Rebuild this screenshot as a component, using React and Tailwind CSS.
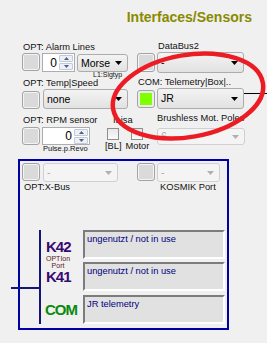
import React from 'react';

function Btn({ className = '' }) {
  return (
    <div className={`w-[18px] shrink-0 rounded-[3px] border border-[#a3a3a3] bg-[#dadada] shadow-[inset_0_0_0_1px_#f4f4f4] ${className}`} />
  );
}

function GreenBtn({ className = '' }) {
  return (
    <div className={`w-[18px] shrink-0 rounded-[3px] border border-[#a3a3a3] bg-[#ececec] p-[2px] ${className}`}>
      <div className="w-full h-full bg-[#80ff00]" />
    </div>
  );
}

function Arrow({ color = '#000' }) {
  return (
    <svg width="7" height="4" viewBox="0 0 7 4" className="shrink-0">
      <path d="M0 0H7L3.5 4Z" fill={color} />
    </svg>
  );
}

function Drop({ className = '', text, disabled }) {
  return (
    <div
      className={`flex shrink-0 items-center justify-between rounded-[3px] border pl-[3px] pr-[5px] text-[10.5px] leading-none ${
        disabled
          ? 'border-[#d0d0d0] bg-[#f4f4f4] text-[#a8a8a8]'
          : 'border-[#acacac] bg-linear-to-b from-[#f3f3f3] to-[#e2e2e2] text-black'
      } ${className}`}
    >
      <span>{text}</span>
      <Arrow color={disabled ? '#b0b0b0' : '#000'} />
    </div>
  );
}

function Num({ className = '' }) {
  return (
    <div className={`flex shrink-0 items-center border border-[#abadb3] bg-white pr-[1px] ${className}`}>
      <span className="flex-1 pr-[2px] text-right text-[12px] leading-none text-black">0</span>
      <div className="flex h-[15px] w-[14px] flex-col gap-[1px]">
        <div className="flex flex-1 items-center justify-center rounded-[1px] border border-[#c3cad6] bg-[#edf1f7]">
          <svg width="5" height="3" viewBox="0 0 5 3"><path d="M0 3H5L2.5 0Z" fill="#4d6185" /></svg>
        </div>
        <div className="flex flex-1 items-center justify-center rounded-[1px] border border-[#c3cad6] bg-[#edf1f7]">
          <svg width="5" height="3" viewBox="0 0 5 3"><path d="M0 0H5L2.5 3Z" fill="#4d6185" /></svg>
        </div>
      </div>
    </div>
  );
}

function Check() {
  return <div className="h-[12px] w-[12px] shrink-0 border border-[#8e8f8f] bg-linear-to-b from-[#e8e8e8] to-[#fafafa]" />;
}

function InfoBox({ className = '', children }) {
  return (
    <div className={`h-[29px] border-2 border-t-[#7c7c7c] border-l-[#7c7c7c] border-r-white border-b-white bg-[#e1e1e1] pl-[2px] pt-[1px] text-[9.3px] leading-[12px] text-[#000080] ${className}`}>
      {children}
    </div>
  );
}

export default function App() {
  return (
    <div className="relative h-[343px] w-[267px] overflow-hidden bg-[#f0f0f0] font-['Liberation_Sans',Arial,sans-serif] text-[9.3px] text-[#111]">
      <div className="h-[24px] pr-[15px] pt-[10px] text-right text-[14px] font-bold leading-[14px] text-[#8a8a00]">
        Interfaces/Sensors
      </div>

      {/* row: alarm lines / databus2 */}
      <div className="mt-[17px] flex pl-[22px]">
        <div className="flex w-[115px] flex-col">
          <div className="h-[12px] pl-[1px] leading-[12px]">OPT: Alarm Lines</div>
          <div className="flex h-[19px] items-start">
            <Btn className="h-[18px]" />
            <Num className="ml-[2px] h-[19px] w-[33px]" />
            <Drop className="ml-[2px] mt-[1px] h-[18px] w-[51px]" text="Morse" />
          </div>
          <div className="h-[6px] pl-[71px] text-[7px] leading-[6px]">L1:Sigtyp</div>
        </div>
        <div className="flex flex-col">
          <div className="h-[11px] pl-[21px] leading-[11px]">DataBus2</div>
          <div className="flex items-start">
            <Btn className="mt-[1px] h-[19px]" />
            <Drop className="ml-[2px] h-[21px] w-[87px]" text="-" />
          </div>
        </div>
      </div>

      {/* row: temp speed / telemetry */}
      <div className="flex pl-[22px]">
        <div className="flex w-[115px] flex-col">
          <div className="h-[11px] pl-[1px] leading-[11px]">OPT: Temp|Speed</div>
          <div className="flex items-start">
            <Btn className="mt-[2px] h-[18px]" />
            <Drop className="ml-[3px] h-[20px] w-[85px]" text="none" />
          </div>
        </div>
        <div className="-mt-[1px] flex flex-1 flex-col">
          <div className="h-[11px] pl-[1px] leading-[11px]">COM: Telemetry|Box|..</div>
          <div className="flex items-start">
            <GreenBtn className="mt-[2px] h-[18px]" />
            <Drop className="ml-[2px] h-[21px] w-[87px]" text="JR" />
            <div className="mt-[5px] flex-1 border-t border-black" />
          </div>
        </div>
      </div>

      {/* row: rpm / motor / poles */}
      <div className="flex pl-[22px]">
        <div className="flex w-[83px] flex-col">
          <div className="mt-[5px] h-[12px] pl-[1px] leading-[12px]">OPT: RPM sensor</div>
          <div className="mt-[1px] flex items-start">
            <Btn className="h-[18px]" />
            <Num className="ml-[2px] h-[18px] w-[48px]" />
          </div>
          <div className="mt-[1px] h-[6px] pl-[21px] text-[7.5px] leading-[6px]">Pulse.p.Revo</div>
        </div>
        <div className="flex w-[45px] flex-col">
          <div className="mt-[5px] h-[12px] pl-[8px] leading-[12px]">It isa</div>
          <div className="mt-[2px] flex pl-[2px]">
            <Check />
            <div className="ml-[12px]"><Check /></div>
          </div>
          <div className="mt-[1px] flex h-[11px] leading-[11px]">
            <span>[BL]</span>
            <span className="ml-[4px]">Motor</span>
          </div>
        </div>
        <div className="ml-[7px] flex flex-col">
          <div className="mt-[3px] h-[12px] leading-[12px]">Brushless Mot. Poles</div>
          <Drop className="mt-[4px] h-[17px] w-[88px]" text="6" disabled />
        </div>
      </div>

      {/* port panel */}
      <div className="ml-[18px] mt-[7px] h-[171px] w-[211px] border-2 border-[#0000a8]">
        <div className="mt-[2px] flex items-start pl-[2px]">
          <Btn className="h-[18px]" />
          <Drop className="ml-[3px] h-[19px] w-[75px]" text="-" disabled />
          <Btn className="ml-[19px] h-[18px]" />
          <Drop className="ml-[2px] h-[19px] w-[63px]" text="-" disabled />
        </div>
        <div className="flex h-[11px] leading-[11px]">
          <span className="w-[140px] pl-[4px]">OPT:X-Bus</span>
          <span>KOSMIK Port</span>
        </div>
        <div className="ml-[19px] mt-[37px] flex">
          <div className="flex h-[94px] w-[44px] flex-col border-l-2 border-[#14147a] pl-[5px]">
            <div className="mt-[9px] h-[16px] text-[15px] font-bold leading-[16px] tracking-[-1px] text-[#3a0a70]">K42</div>
            <div className="h-[14px] w-[24px] text-center text-[7px] leading-[7px] text-[#5a2020]">
              <div>OPTIon</div>
              <div>Port</div>
            </div>
            <div className="h-[16px] text-[15px] font-bold leading-[16px] tracking-[-1px] text-[#3a0a70]">K41</div>
            <div className="-ml-[1px] mt-[17px] h-[16px] text-[15px] font-bold leading-[16px] tracking-[-1px] text-[#0b8a0b]">COM</div>
          </div>
          <div className="flex w-[142px] flex-col">
            <InfoBox>ungenutzt / not in use</InfoBox>
            <InfoBox className="mt-[3px]">ungenutzt / not in use</InfoBox>
            <InfoBox className="mt-[4px]">JR telemetry</InfoBox>
          </div>
        </div>
      </div>

      {/* connector stub */}
      <div className="absolute left-[11px] top-[287px] h-[2px] w-[30px] bg-[#14147a]" />

      {/* red annotation */}
      <svg className="pointer-events-none absolute inset-0" width="267" height="343" viewBox="0 0 267 343">
        <ellipse cx="188" cy="96" rx="76" ry="41" transform="rotate(-10 188 96)" fill="none" stroke="#ec1c24" strokeWidth="4.5" />
      </svg>
    </div>
  );
}
